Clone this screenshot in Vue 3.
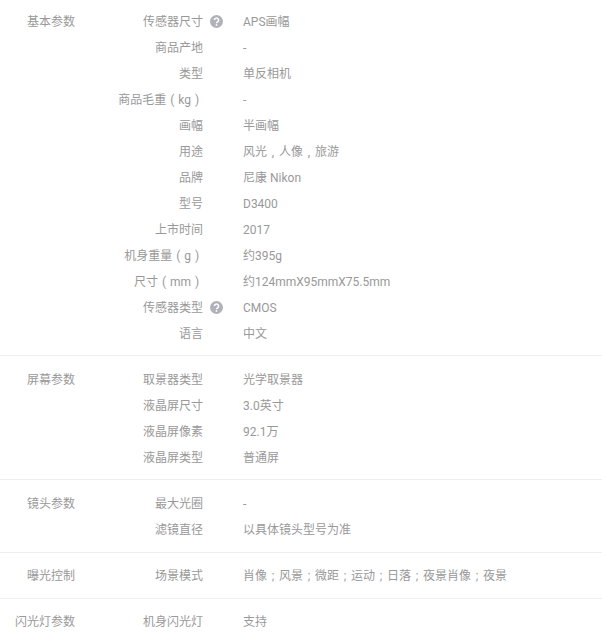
<script setup>
const groups = [
  { title: '基本参数', rows: [
    ['传感器尺寸', 'APS画幅', true], ['商品产地', '-'], ['类型', '单反相机'], ['商品毛重（kg）', '-'],
    ['画幅', '半画幅'], ['用途', '风光，人像，旅游'], ['品牌', '尼康 Nikon'], ['型号', 'D3400'],
    ['上市时间', '2017'], ['机身重量（g）', '约395g'], ['尺寸（mm）', '约124mmX95mmX75.5mm'],
    ['传感器类型', 'CMOS', true], ['语言', '中文'] ] },
  { title: '屏幕参数', rows: [['取景器类型', '光学取景器'], ['液晶屏尺寸', '3.0英寸'], ['液晶屏像素', '92.1万'], ['液晶屏类型', '普通屏']] },
  { title: '镜头参数', rows: [['最大光圈', '-'], ['滤镜直径', '以具体镜头型号为准']] },
  { title: '曝光控制', rows: [['场景模式', '肖像；风景；微距；运动；日落；夜景肖像；夜景']] },
  { title: '闪光灯参数', rows: [['机身闪光灯', '支持']] },
]
const punct = { '（': '(', '）': ')', '，': ',', '；': ';' }
const parts = (s) => s.split(/([（），；])/).filter(Boolean).map((t) => ({ t: punct[t] || t, p: !!punct[t] }))
</script>

<template>
  <div class="page">
    <section v-for="g in groups" :key="g.title" class="group">
      <div class="title">{{ g.title }}</div>
      <div class="rows">
        <div v-for="r in g.rows" :key="r[0]" class="row">
          <div class="key">
            <template v-for="(x, i) in parts(r[0])" :key="i"><span :class="{ cell: x.p }">{{ x.t }}</span></template>
            <svg v-if="r[2]" class="help" viewBox="0 0 13 13" width="13" height="13">
              <circle cx="6.5" cy="6.5" r="6.5" fill="#b1b1b9" />
              <path d="M4.4 5.1a2.1 2 0 1 1 3.2 1.7c-.8.5-1.1.8-1.1 1.5" fill="none" stroke="#fff" stroke-width="1.5" />
              <rect x="5.7" y="9.2" width="1.6" height="1.6" fill="#fff" />
            </svg>
          </div>
          <div class="val"><template v-for="(x, i) in parts(r[1])" :key="i"><span :class="{ cell: x.p }">{{ x.t }}</span></template></div>
        </div>
      </div>
    </section>
  </div>
</template>

<style scoped>
.page { width: 602px; height: 635px; overflow: hidden; background: #fff; padding-top: 9px; box-sizing: border-box;
  font: 12px/26px Roboto, "Noto Sans CJK SC", sans-serif; color: #999; }
.group { display: flex; border-bottom: 1px solid #eee; padding-bottom: 8px; margin-bottom: 11px; }
.group:nth-child(n+3) { padding-bottom: 9px; margin-bottom: 10px; }
.group:last-child { border-bottom: 0; }
.title { width: 75px; text-align: right; flex: none; white-space: nowrap; }
.rows { flex: 1; }
.row { display: flex; height: 26px; }
.key { width: 128px; flex: none; text-align: right; position: relative; white-space: nowrap; }
.val { margin-left: 40px; white-space: nowrap; }
.cell { display: inline-block; width: 12px; text-align: center; }
.help { position: absolute; left: 135px; top: 6px; }
</style>
